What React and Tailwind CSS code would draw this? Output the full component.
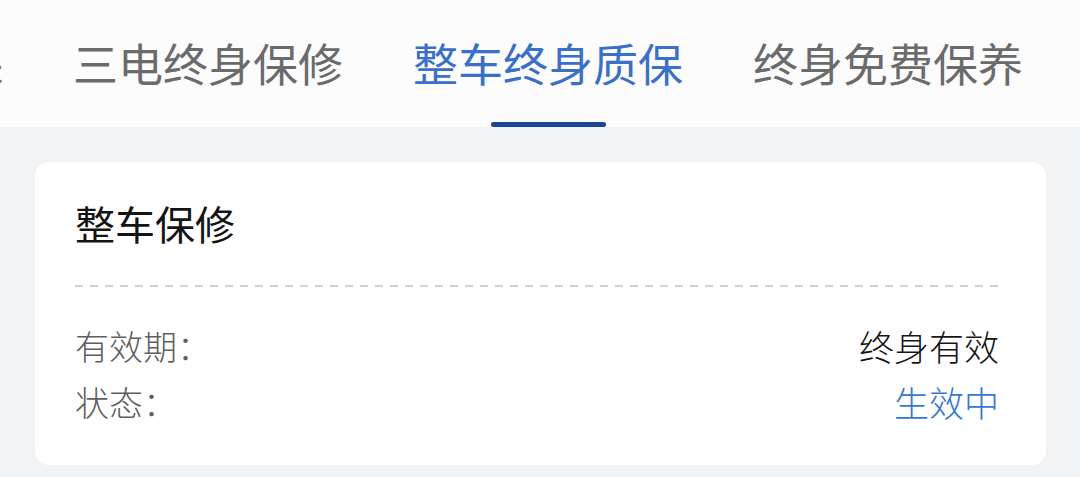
import React from 'react';

const tabs = ['动力电池质保', '三电终身保修', '整车终身质保', '终身免费保养'];
const active = 2;

const rows = [
  { label: '有效期：', value: '终身有效', valueClass: 'text-[#161616]' },
  { label: '状态：', value: '生效中', valueClass: 'text-[#3478d0]' },
];

export default function App() {
  return (
    <div className="w-full h-[477px] overflow-hidden bg-[#f2f3f5] font-['Noto_Sans_CJK_SC','Noto_Sans',sans-serif]">
      {/* tabs */}
      <div className="h-[127px] bg-[#fcfcfc] overflow-hidden">
        <div className="flex h-full gap-[70px] ml-[-267px]">
          {tabs.map((t, i) => (
            <div key={t} className="flex flex-col items-center h-full shrink-0">
              <div
                className={`pt-[40px] text-[45px] leading-none whitespace-nowrap ${
                  i === active ? 'text-[#3a70c5]' : 'text-[#6b6b6b]'
                }`}
              >
                {t}
              </div>
              {i === active && (
                <div className="mt-auto h-[5px] w-[115px] rounded-full bg-[#1d4497]" />
              )}
            </div>
          ))}
        </div>
      </div>

      {/* card */}
      <div className="ml-[35px] mt-[35px] w-[1011px] h-[303px] rounded-[14px] bg-white pl-[40px] pr-[46px]">
        <div className="pt-[41px] text-[40px] leading-none text-[#141414]">整车保修</div>
        <div className="mt-[42px] h-[2px] bg-[repeating-linear-gradient(to_right,#d2d2d2_0_8px,transparent_8px_15px)]" />
        <div className="mt-[41px] flex flex-col gap-[21px]">
          {rows.map((r) => (
            <div key={r.label} className="flex justify-between items-center h-[35px] leading-none">
              <span className="text-[34px] text-[#5f5f5f] font-light">{r.label}</span>
              <span className={`text-[35px] mr-[1px] font-light ${r.valueClass}`}>{r.value}</span>
            </div>
          ))}
        </div>
      </div>
    </div>
  );
}
